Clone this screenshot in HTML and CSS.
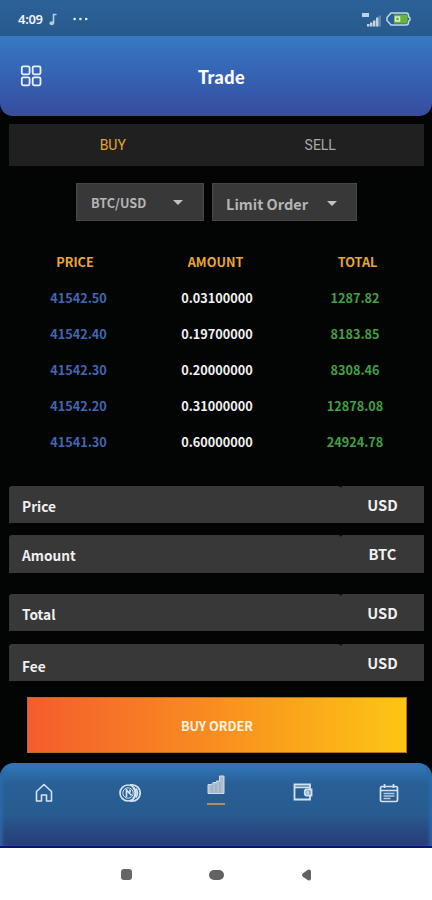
FILE: index.html
```
<!DOCTYPE html>
<html lang="en">
<head>
	<meta charset="UTF-8">
	<title>Trade</title>
	<link rel="stylesheet" href="styles.css">
</head>
<body>
	<div class="status">
		<span class="time">4:09</span>
		<svg class="note" width="8" height="13" viewBox="0 0 8 13"><path d="M4.5 10V1.5H7.5" fill="none" stroke="#b5cce0" stroke-width="1.6"/><ellipse cx="2.8" cy="10.3" rx="2.3" ry="2" fill="#b5cce0"/></svg>
		<svg class="dots" width="15" height="4" viewBox="0 0 15 4" fill="#e6eff7"><circle cx="1.6" cy="2" r="1.3"/><circle cx="7.4" cy="2" r="1.3"/><circle cx="13.2" cy="2" r="1.3"/></svg>
		<svg class="signal" width="20" height="15" viewBox="0 0 20 15" fill="#c3d1de"><path d="M0 1h7v4H0zM5 12h2.5v2.5H5zM8 10.5h2.500v4H8zM11 8.500h2.500v6H11zM14 5.500h2.500v9H14z"/><path d="M16.500 3.500h2.500v11h-2.500z" opacity=".35"/></svg>
		<svg class="battery" width="25" height="14" viewBox="0 0 25 14"><path d="M5 1h15q2.500 0 2.500 2.500v1.500q1.500 0 1.500 2t-1.500 2v1.500q0 2.500-2.500 2.500H5L1 8.500v-3z" fill="#2b5e92" stroke="#bcd7ea" stroke-width="1.500"/><path d="M8 2.500h12q1.500 0 1.500 1.500v6q0 1.500-1.500 1.500H8z" fill="#67b43b"/><path d="M9.500 5h4v4h-4z" fill="none" stroke="#d8efc9" stroke-width="1.500"/></svg>
	</div>
	<header class="header">
		<svg class="grid-icon" width="22" height="22" viewBox="0 0 22 22" fill="none" stroke="#e9f1fc" stroke-width="1.800"><rect x="1.800" y="1.300" width="7.800" height="8" rx="1.500"/><rect x="12.700" y="1.300" width="7.800" height="8" rx="1.500"/><rect x="1.800" y="12.300" width="7.800" height="8" rx="1.500"/><rect x="12.700" y="12.300" width="7.800" height="8" rx="1.500"/></svg>
		<h1>Trade</h1>
	</header>

	<main class="main">
		<div class="tabs">
			<div class="tab active">BUY</div>
			<div class="tab">SELL</div>
		</div>
		<div class="selects">
			<div class="select pair">BTC/USD<i class="caret"></i></div>
			<div class="select type">Limit Order<i class="caret"></i></div>
		</div>

		<div class="book">
			<div class="row head"><span>PRICE</span><span>AMOUNT</span><span>TOTAL</span></div>
			<div class="row"><span>41542.50</span><span>0.03100000</span><span>1287.82</span></div>
			<div class="row"><span>41542.40</span><span>0.19700000</span><span>8183.85</span></div>
			<div class="row"><span>41542.30</span><span>0.20000000</span><span>8308.46</span></div>
			<div class="row"><span>41542.20</span><span>0.31000000</span><span>12878.08</span></div>
			<div class="row"><span>41541.30</span><span>0.60000000</span><span>24924.78</span></div>
		</div>

		<div class="form">
			<div class="field"><span class="label">Price</span><span class="unit">USD</span></div>
			<div class="field amount"><span class="label">Amount</span><span class="unit">BTC</span></div>
			<div class="field total"><span class="label">Total</span><span class="unit">USD</span></div>
			<div class="field fee"><span class="label">Fee</span><span class="unit">USD</span></div>
		</div>
		<div class="buy">BUY ORDER</div>
	</main>

	<nav class="nav">
		<div class="item"><svg width="18" height="20" viewBox="0 0 18 20"><path d="M1.500 8.500L9 1.500l7.500 7V18h-5v-6h-5v6h-5z" fill="none" stroke="#d3e3f2" stroke-width="1.600" stroke-linejoin="round"/></svg></div>
		<div class="item"><svg width="22" height="20" viewBox="0 0 22 20" fill="none" stroke="#d3e3f2" stroke-width="1.700"><path d="M11 1.800h2a8 8 0 0 1 0 16.400h-2"/><path d="M14 4.500a8 8 0 0 1 0 11M17 5.500a8 8 0 0 1 0 9"/><circle cx="9" cy="10" r="8"/><circle cx="9" cy="10" r="5.200" stroke-width="1"/><path d="M7.500 6v8M7.500 7l5 5.500M11 6.500v3"/></svg></div>
		<div class="item current"><svg width="18" height="20" viewBox="0 0 18 20"><path d="M1 9.500h3.500l1.500-2h3.500v-1.500h3V1h4.500v17.500H1z" fill="#adc0d1" stroke="#d0dce6"/><path d="M5 10v8M9 9v9M13 7v11" stroke="#8ca7c0" stroke-width=".8"/></svg></div>
		<div class="item"><svg width="20" height="19" viewBox="0 0 20 19" fill="none" stroke="#d3e3f2" stroke-width="1.800"><path d="M17 6V1.500H1.500v15H17V13M1.500 4.300H17"/><path d="M18.500 6.500h-5q-1.800 0-1.800 3t1.800 3h5z" fill="#6c94b8"/><circle cx="14.800" cy="9.500" r="1" stroke-width="1.200"/></svg></div>
		<div class="item"><svg width="20" height="20" viewBox="0 0 20 20" fill="none" stroke="#d3e3f2" stroke-width="1.700"><rect x="1.500" y="3.500" width="17" height="15" rx="1.500"/><path d="M1.500 7.500h17M5.500 1v4M14.500 1v4"/><path d="M4.500 10.500h11M4.500 13h11M4.500 15.500h7" stroke-width="1.400" opacity=".8"/></svg></div>
	</nav>
	<div class="system">
		<i class="square"></i>
		<i class="pill"></i>
		<svg width="11" height="12" viewBox="0 0 11 12"><path d="M7 .800L2 4.200q-2 1.800 0 3.600l5 3.400q3 .800 3-2V2.800q0-2.800-3-2z" fill="#626262"/></svg>
	</div>
</body>
</html>
```
FILE: styles.css
```
* {
	box-sizing: border-box;
}
body {
	margin: 0;
	height: 900px;
	overflow: hidden;
	background: #030504;
	color: #f2f2f2;
	font-family: "Noto Sans CJK SC", "Noto Sans", sans-serif;
	font-weight: 700;
}
svg {
	display: block;
	flex-shrink: 0;
}
.status {
	display: flex;
	align-items: center;
	height: 36px;
	padding: 2px 21px 0 18px;
	background: linear-gradient(#2a6298, #285a8c);
}
.time {
	width: 26px;
	font: 600 13px/18px "Noto Sans", sans-serif;
	letter-spacing: -.3px;
	white-space: nowrap;
}
.note {
	margin-left: 5px;
}
.dots {
	margin-left: 16px;
}
.signal {
	margin-left: auto;
}
.battery {
	margin-left: 4px;
}
.header {
	display: grid;
	grid-template-columns: 22px 1fr 22px;
	align-items: center;
	height: 80px;
	padding: 0 20px;
	border-radius: 0 0 13px 13px;
	background: linear-gradient(#3779c3, #3560b1 55%, #384c9e);
}
.header h1 {
	margin: 2px 0 0;
	padding-left: 11px;
	font: 900 18px/24px Lato, sans-serif;
	letter-spacing: .4px;
	text-align: center;
	color: #fff;
}
.main {
	height: 647px;
	padding: 8px 8px 0 9px;
}
.tabs {
	display: flex;
	height: 42px;
	background: #202020;
}
.tab {
	flex: 1;
	font: 400 14px/43px Roboto, sans-serif;
	text-align: center;
	color: #a8a8a8;
}
.tab.active {
	color: #e0a536;
}
.selects {
	display: flex;
	gap: 8px;
	margin: 17px 0 0 67px;
}
.select {
	display: flex;
	align-items: center;
	justify-content: space-between;
	height: 38px;
	border: 1px solid #464646;
	background: #383838;
	color: #b5b5b5;
}
.pair {
	width: 128px;
	padding: 1px 20px 0 14px;
	font-size: 12.7px;
}
.type {
	width: 145px;
	padding: 2px 19px 0 13px;
	font-size: 14.500px;
}
.caret {
	border: 5px solid transparent;
	border-top-color: #c2c2c2;
	border-bottom: 0;
}
.book {
	margin-top: 23px;
}
.row {
	display: grid;
	grid-template-columns: 139px 138px 1fr;
	font-size: 12.7px;
	line-height: 36px;
	text-align: center;
}
.row span:first-child {
	color: #4267b2;
}
.row span:last-child {
	color: #43a047;
}
.row.head span {
	color: #e9a72f;
}
.row.head span:first-child {
	padding-right: 7px;
}
.row.head span:nth-child(2) {
	padding-right: 3px;
}
.row.head span:last-child {
	padding-left: 5px;
}
.form {
	margin-top: 26px;
}
.field {
	display: flex;
	height: 37px;
	margin-bottom: 12px;
	line-height: 37px;
	color: #f0f0f0;
}
.field.amount {
	height: 38px;
	margin-bottom: 21px;
}
.field.total {
	margin-bottom: 13px;
}
.label {
	flex: 1;
	padding: 2px 13px 0;
	border-radius: 3px 3px 0 0;
	background: #383838;
	font-size: 13.700px;
}
.field.fee .label {
	padding-top: 4px;
}
.unit {
	width: 83px;
	border-radius: 2px 0 0 0;
	background: #383838;
	font-size: 14.700px;
	text-align: center;
}
.buy {
	height: 56px;
	margin: 16px 17px 0 18px;
	border: 1px solid #b86e24;
	background: linear-gradient(90deg, #f45d2d, #f98e20 50%, #fdc613);
	color: #fff5e0;
	font-size: 12.700px;
	line-height: 56px;
	text-align: center;
}
.form .field:last-child {
	margin-bottom: 0;
}
.nav {
	display: flex;
	justify-content: space-around;
	height: 85px;
	border-bottom: 2px solid #10107c;
	border-radius: 14px 14px 0 0;
	background: linear-gradient(#3378bb, #285f95 26%, #285c90 62%, #284a82 80%, #283c78);
	box-shadow: inset 4px 0 4px -2px #2d6bad, inset -4px 0 4px -2px #2d6bad;
}
.item {
	display: flex;
	justify-content: center;
	width: 86px;
	padding: 20px 0 0 1px;
}
.item.current {
	flex-direction: column;
	align-items: center;
	justify-content: flex-start;
	padding-top: 12px;
}
.item.current::after {
	content: "";
	width: 18px;
	height: 2px;
	margin-top: 8px;
	background: #b48a63;
}
.system {
	display: flex;
	align-items: center;
	height: 52px;
	padding: 1px 0 0 121px;
	background: #fff;
}
.square {
	width: 11px;
	height: 11px;
	border-radius: 3px;
	background: #666;
}
.pill {
	width: 15px;
	height: 10px;
	margin: 0 77px 0 77px;
	border-radius: 5px;
	background: #626262;
}
```
